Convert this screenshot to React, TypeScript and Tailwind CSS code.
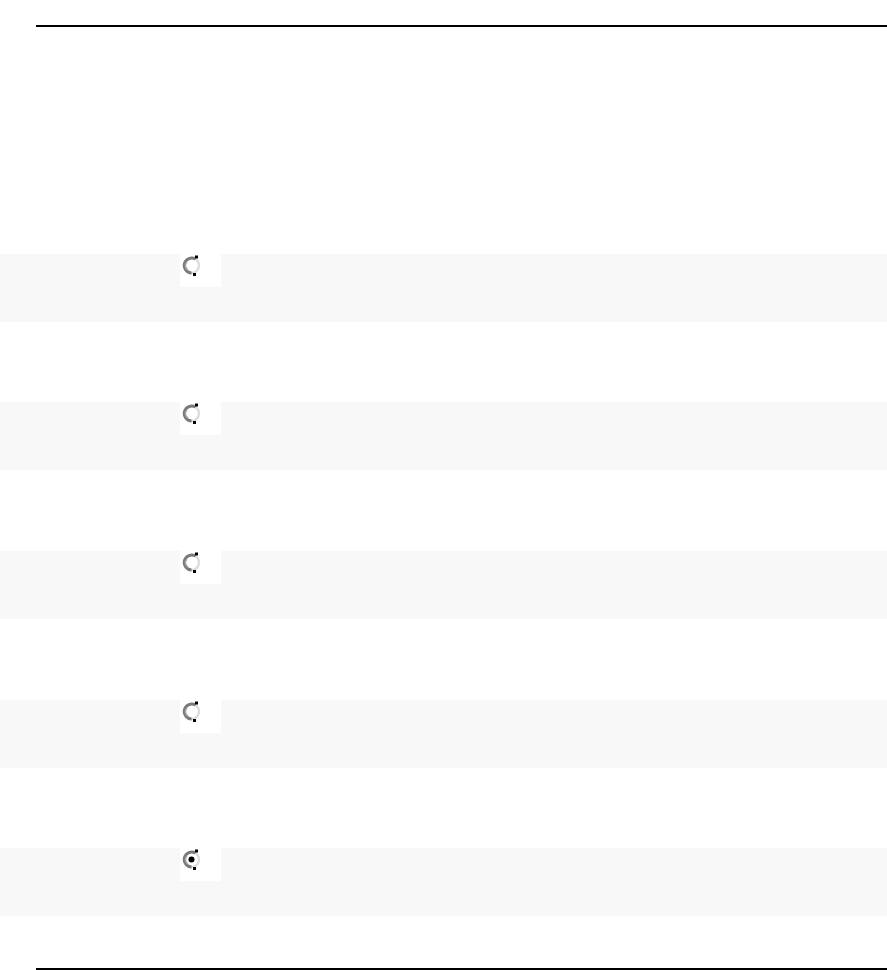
import React from 'react';

const Radio: React.FC<{ checked?: boolean }> = ({ checked }) => (
  <svg width="22" height="24" viewBox="0 0 22 24" className="ml-[2px] mt-[5px]">
    <circle cx="9.5" cy="11.5" r="7.5" fill="none" stroke="#dcdcdc" strokeWidth="2.4" />
    <path d="M13.5 5 A7.5 7.5 0 1 0 9.5 19" fill="none" stroke="#7a7a7a" strokeWidth="3" />
    <path d="M5 8 A5 5 0 0 0 6 16" fill="none" stroke="#a8a8a8" strokeWidth="1.5" />
    <rect x="13" y="1.5" width="3" height="3" fill="#000" />
    <rect x="11" y="19" width="3" height="3" fill="#000" />
    {checked && <circle cx="9.5" cy="11.5" r="3" fill="#000" />}
  </svg>
);

const Row: React.FC<{ checked?: boolean; mt: string }> = ({ checked, mt }) => (
  <div className={`h-[68px] bg-[#f8f8f8] ${mt}`}>
    <div className="ml-[180px] w-[41px] h-[33px] bg-white">
      <Radio checked={checked} />
    </div>
  </div>
);

export default function App() {
  return (
    <div className="w-[887px] h-[970px] bg-white overflow-hidden">
      <div className="pt-[25px] pl-[36px]">
        <div className="h-[2px] bg-black" />
      </div>
      <Row mt="mt-[227px]" />
      <Row mt="mt-[80px]" />
      <Row mt="mt-[81px]" />
      <Row mt="mt-[81px]" />
      <Row mt="mt-[80px]" checked />
      <div className="pt-[52px] pl-[36px]">
        <div className="h-[2px] bg-black" />
      </div>
    </div>
  );
}
